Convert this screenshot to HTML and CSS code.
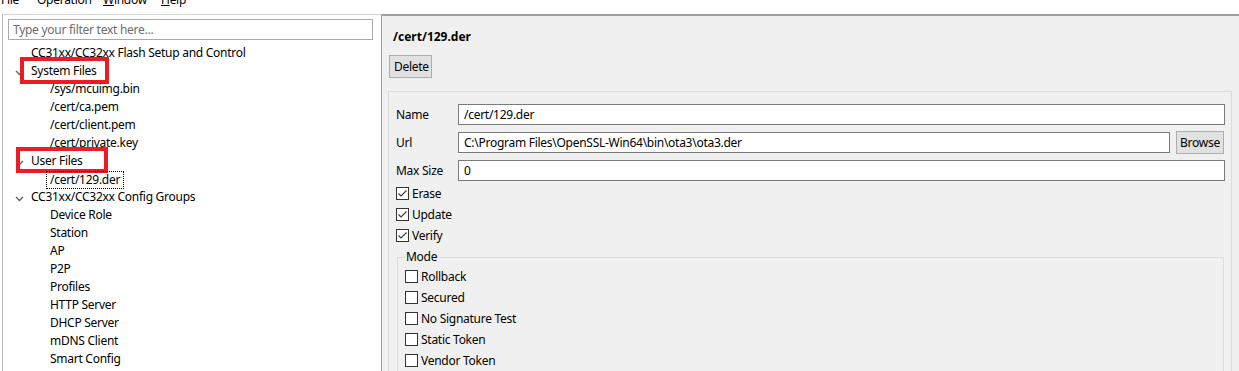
FILE: index.html
```html
<!DOCTYPE html>
<html lang="en">
<head>
  <meta charset="UTF-8" />
  <title>UniFlash - CC31xx/CC32xx</title>
  <link rel="stylesheet" href="styles.css">
</head>
<body>

  <div class="menubar">
    <span class="menu">File</span>
    <span class="menu">Operation</span>
    <span class="menu"><u>W</u>indow</span>
    <span class="menu"><u>H</u>elp</span>
  </div>

  <div class="workbench">

    <div class="navigator">
      <div class="filter">
        <input type="text" placeholder="Type your filter text here..." />
      </div>
      <ul class="tree">
        <li class="lvl1">CC31xx/CC32xx Flash Setup and Control</li>
        <li class="lvl1 open">
          <span class="twist"><svg width="9" height="6" viewBox="0 0 9 6"><polyline points="1,1 4.5,4.5 8,1" /></svg></span>
          System Files
          <span class="mark mark-sys"></span>
        </li>
        <li class="lvl2">/sys/mcuimg.bin</li>
        <li class="lvl2">/cert/ca.pem</li>
        <li class="lvl2">/cert/client.pem</li>
        <li class="lvl2">/cert/private.key</li>
        <li class="lvl1 open">
          <span class="twist"><svg width="9" height="6" viewBox="0 0 9 6"><polyline points="1,1 4.5,4.5 8,1" /></svg></span>
          User Files
          <span class="mark mark-user"></span>
        </li>
        <li class="lvl2 selected"><span class="focus">/cert/129.der</span></li>
        <li class="lvl1 open">
          <span class="twist"><svg width="9" height="6" viewBox="0 0 9 6"><polyline points="1,1 4.5,4.5 8,1" /></svg></span>
          CC31xx/CC32xx Config Groups
        </li>
        <li class="lvl2">Device Role</li>
        <li class="lvl2">Station</li>
        <li class="lvl2">AP</li>
        <li class="lvl2">P2P</li>
        <li class="lvl2">Profiles</li>
        <li class="lvl2">HTTP Server</li>
        <li class="lvl2">DHCP Server</li>
        <li class="lvl2">mDNS Client</li>
        <li class="lvl2">Smart Config</li>
      </ul>
    </div>

    <div class="editor">
      <h2 class="file-title">/cert/129.der</h2>
      <button class="btn btn-delete">Delete</button>

      <div class="group">
        <div class="form">
          <label>Name</label>
          <input class="wide" type="text" value="/cert/129.der" />

          <label>Url</label>
          <input type="text" value="C:\Program Files\OpenSSL-Win64\bin\ota3\ota3.der" />
          <button class="btn">Browse</button>

          <label>Max Size</label>
          <input class="wide" type="text" value="0" />
        </div>

        <div class="checks">
          <div class="check"><span class="box"><svg width="11" height="11" viewBox="0 0 11 11"><polyline points="1.5,5.5 4,8 9.5,2.5" /></svg></span>Erase</div>
          <div class="check"><span class="box"><svg width="11" height="11" viewBox="0 0 11 11"><polyline points="1.5,5.5 4,8 9.5,2.5" /></svg></span>Update</div>
          <div class="check"><span class="box"><svg width="11" height="11" viewBox="0 0 11 11"><polyline points="1.5,5.5 4,8 9.5,2.5" /></svg></span>Verify</div>
        </div>

        <fieldset class="mode">
          <legend>Mode</legend>
          <div class="check"><span class="box"></span>Rollback</div>
          <div class="check"><span class="box"></span>Secured</div>
          <div class="check"><span class="box"></span>No Signature Test</div>
          <div class="check"><span class="box"></span>Static Token</div>
          <div class="check"><span class="box"></span>Vendor Token</div>
        </fieldset>
      </div>
    </div>

  </div>

</body>
</html>
```

FILE: styles.css
```css
body {
  margin: 0;
  height: 371px;
  overflow: hidden;
  background: #ffffff;
  font-family: "Noto Sans", "Open Sans", sans-serif;
  font-size: 12px;
  letter-spacing: -0.27px;
  color: #000;
}

/* menu bar, scrolled mostly out of view */
.menubar {
  height: 14px;
  overflow: hidden;
  display: grid;
  grid-template-columns: 36px 66px 58px auto;
  padding-left: 1px;
}

.menu {
  line-height: 16px;
  margin-top: -8px;
}

.menu u {
  text-decoration-thickness: 1px;
}

.workbench {
  display: flex;
  height: 357px;
  overflow: hidden;
}

/* left: file tree */
.navigator {
  width: 380px;
  flex-shrink: 0;
  margin-left: 2px;
  border-left: 1px solid #b9b9b9;
  border-top: 1px solid #d4d4d4;
  border-right: 1px solid #a0a0a0;
  background: #fff;
  padding: 4px 0 0 0;
  box-sizing: border-box;
}

.filter {
  padding-left: 5px;
}

.filter input {
  width: 365px;
  height: 21px;
  box-sizing: border-box;
  border: 1px solid #a9a9a9;
  padding: 0 4px;
  font: inherit;
  letter-spacing: inherit;
  outline: none;
}

.filter input::placeholder {
  color: #6d6d6d;
}

.tree {
  list-style: none;
  margin: 4px 0 0 0;
  padding: 0;
}

.tree li {
  position: relative;
  display: flex;
  align-items: center;
  height: 18px;
  line-height: 18px;
  white-space: nowrap;
}

.lvl1 {
  padding-left: 28px;
}

.lvl1.open {
  padding-left: 12px;
}

.lvl2 {
  padding-left: 47px;
}

.lvl2.selected {
  padding-left: 43px;
}

.twist {
  width: 16px;
  display: flex;
  align-items: center;
  padding-top: 3px;
}

.twist polyline {
  fill: none;
  stroke: #5f5f5f;
  stroke-width: 1.3;
}

.focus {
  display: inline-block;
  line-height: 16px;
  padding: 0 3px;
  border: 1px dotted #000;
  margin-top: 2px;
}

.mark {
  position: absolute;
  top: -5px;
  border: 4px solid #ed1c24;
  box-sizing: border-box;
}

.mark-sys {
  left: 17px;
  width: 89px;
  height: 27px;
}

.mark-user {
  left: 13px;
  width: 92px;
  height: 26px;
}

/* right: file editor */
.editor {
  flex: 1;
  display: flex;
  flex-direction: column;
  align-items: flex-start;
  background: #f0f0f0;
  border-top: 2px solid #a0a0a0;
  padding: 0 7px 0 6px;
  overflow: hidden;
}

.file-title {
  margin: 13px 0 0 5px;
  font-size: 12px;
  line-height: 16px;
  font-weight: bold;
  letter-spacing: 0;
}

.btn {
  font: inherit;
  letter-spacing: inherit;
  color: #000;
  background: #e1e1e1;
  border: 1px solid #adadad;
  height: 23px;
  padding: 0 4px;
}

.btn-delete {
  margin: 10px 0 0 1px;
  width: 43px;
}

.group {
  flex: 1;
  align-self: stretch;
  margin-top: 13px;
  border: 1px solid #dcdcdc;
  border-bottom: none;
  padding: 12px 6px 0 7px;
}

.form {
  display: grid;
  grid-template-columns: 62px 1fr auto;
  row-gap: 6px;
  align-items: center;
}

.form label {
  line-height: 16px;
}

.form input {
  font: inherit;
  letter-spacing: inherit;
  height: 21px;
  box-sizing: border-box;
  border: 1px solid #7a7a7a;
  background: #fff;
  padding: 0 5px;
  outline: none;
}

.form input.wide {
  grid-column: 2 / 4;
}

.form .btn {
  width: 48px;
  margin-left: 6px;
  margin-right: 1px;
  padding: 0;
}

.checks {
  margin-top: 2px;
}

.check {
  display: flex;
  align-items: center;
  height: 21px;
  line-height: 16px;
}

.box {
  width: 13px;
  height: 13px;
  box-sizing: border-box;
  border: 1px solid #333;
  background: #fff;
  margin-right: 3px;
  display: flex;
  align-items: center;
  justify-content: center;
}

.box polyline {
  fill: none;
  stroke: #3c3c3c;
  stroke-width: 1.2;
}

.mode {
  margin: 3px 1px 0 1px;
  padding: 0 0 0 7px;
  border: 1px solid #dcdcdc;
  border-bottom: none;
}

.mode legend {
  padding: 0 2px 0 1px;
  line-height: 16px;
}

.mode .check:first-of-type {
  margin-top: 1px;
}
```
